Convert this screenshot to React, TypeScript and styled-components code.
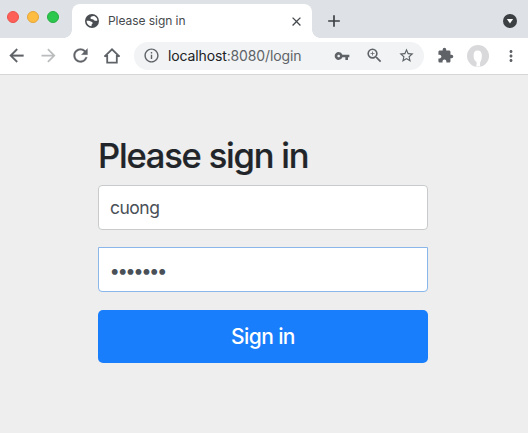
import React from "react";
import styled, { createGlobalStyle } from "styled-components";
import {
  MdArrowBack,
  MdArrowForward,
  MdRefresh,
  MdInfoOutline,
  MdVpnKey,
  MdZoomIn,
  MdStarBorder,
  MdExtension,
  MdMoreVert,
  MdClose,
  MdAdd,
} from "react-icons/md";

const GlobalStyle = createGlobalStyle`
  *, *::before, *::after { box-sizing: border-box; }
  body { margin: 0; background: #eee; font-family: Inter, "Liberation Sans", sans-serif; }
  svg { display: block; flex: none; }
`;

const Window = styled.div`
  display: flex;
  flex-direction: column;
  width: 528px;
  height: 433px;
  overflow: hidden;
  background: #eee;
`;

const TabStrip = styled.header`
  display: flex;
  height: 38px;
  padding: 4px 11px 0 7px;
  background: #dee1e6;
`;

const TrafficLights = styled.div`
  display: flex;
  gap: 8px;
  width: 65px;
  padding-top: 7px;
`;

const Light = styled.span<{ $fill: string; $edge: string }>`
  width: 12px;
  height: 12px;
  border-radius: 50%;
  background: ${(p) => p.$fill};
  border: 1px solid ${(p) => p.$edge};
`;

const Tab = styled.div`
  position: relative;
  display: flex;
  align-items: center;
  width: 240px;
  height: 34px;
  padding: 0 8px 0 13px;
  border-radius: 8px 8px 0 0;
  background: #fff;
  color: #45494d;

  &::before,
  &::after {
    content: "";
    position: absolute;
    bottom: 0;
    width: 8px;
    height: 8px;
  }
  &::before {
    left: -8px;
    background: radial-gradient(circle at 0 0, transparent 7.5px, #fff 8px);
  }
  &::after {
    right: -8px;
    background: radial-gradient(circle at 100% 0, transparent 7.5px, #fff 8px);
  }
`;

const TabTitle = styled.span`
  flex: 1;
  margin-left: 9px;
  font-size: 12px;
  line-height: 16px;
  letter-spacing: -0.05px;
  white-space: nowrap;
`;

const NewTab = styled.div`
  display: flex;
  align-items: center;
  margin-left: 12px;
  color: #3c4043;
`;

const TabSearch = styled.div`
  display: flex;
  align-items: center;
  margin-left: auto;
`;

const Toolbar = styled.nav`
  display: flex;
  align-items: center;
  height: 37px;
  padding: 0 0 1px 5px;
  border-bottom: 1px solid #d5d6d8;
  background: #fff;
  color: #5f6368;
`;

const ToolSlot = styled.span<{ $width: number; $faded?: boolean; $heavy?: boolean }>`
  display: flex;
  flex: none;
  justify-content: center;
  width: ${(p) => p.$width}px;
  color: ${(p) => (p.$faded ? "#babcbe" : "#5f6368")};

  ${(p) => p.$heavy && "path:last-child { stroke: currentColor; stroke-width: 0.3px; }"}
`;

const MenuSlot = styled(ToolSlot)`
  margin-left: 4px;
`;

const AddressBar = styled.div`
  display: flex;
  flex: none;
  align-items: center;
  width: 290px;
  height: 28px;
  margin-left: 1px;
  padding: 0 2px 0 9px;
  border-radius: 14px;
  background: #f1f3f4;
`;

const Url = styled.span`
  flex: 1;
  margin-left: 8px;
  font-size: 14px;
  line-height: 20px;
  white-space: nowrap;
  letter-spacing: -0.13px;
  color: #5f6368;
`;

const Host = styled.span`
  color: #202124;
`;

const LoginForm = styled.form`
  display: flex;
  flex-direction: column;
  width: 330px;
  margin: 60px auto 0 98px;
`;

const Heading = styled.h2`
  margin: 0 0 9px;
  font-size: 34.5px;
  font-weight: 500;
  line-height: 41px;
  letter-spacing: -1.2px;
  white-space: nowrap;
  color: #212529;
  -webkit-text-stroke: 0.2px #212529;
`;

const Field = styled.input`
  width: 100%;
  height: 45px;
  margin: 0 0 17px;
  padding: 0 11px;
  border: 1px solid #c8cacc;
  border-radius: 4px;
  outline: none;
  background: #fff;
  color: #495057;
  font: 400 17.5px/24px Inter, "Liberation Sans", sans-serif;
  letter-spacing: -0.5px;
`;

const PasswordField = styled(Field)`
  margin-bottom: 18px;
  padding: 0 10.5px;
  border-color: #8ab6ea;
  border-radius: 0 0 4px 4px;
  font-size: 18.5px;
  letter-spacing: -2.5px;
`;

const SubmitButton = styled.button`
  height: 53px;
  padding: 0;
  border: 0;
  border-radius: 5px;
  background: #197efb;
  color: #fff;
  font: 500 21px/30px Inter, "Liberation Sans", sans-serif;
  letter-spacing: -0.6px;
`;

const GlobeIcon = () => (
  <svg width="14" height="14" viewBox="0 0 14 14">
    <circle cx="7" cy="7" r="7" fill="#4a4d51" />
    <path d="M9.200 2C7.300 1.900 5.600 2.600 5.500 3.900c-.1 1.200 1.200 1.200 2.300 1.300.9.100.7 1.100 1.500 1.400.8.300 2-.2 3 .2.2-2-.9-3.800-3.100-4.800z" fill="#fff" />
    <path d="M1.600 6.800c1.500.1 3.100-.1 4.100.6.800.6 2 .4 2 1.500 0 .9-1.200 1-1.200 2 0 .5.200.9.100 1.400-2.800-.2-5-2.400-5-5.500z" fill="#fff" />
  </svg>
);

const HomeIcon = () => (
  <svg width="18" height="18" viewBox="0 0 18 18" fill="none" stroke="currentColor" strokeWidth="1.8">
    <path d="M1.500 9.700 9 2.300l7.500 7.400M4.200 8v7.700h9.600V8" />
    <path d="M1.600 9.300h3M13.400 9.300h3" strokeWidth="1.400" />
  </svg>
);

const TabSearchIcon = () => (
  <svg width="14" height="14" viewBox="0 0 14 14">
    <circle cx="7" cy="7" r="7" fill="#3c4043" />
    <path d="M3.900 5h6.200L7 9.400z" fill="#fff" />
  </svg>
);

const Avatar = () => (
  <svg width="22" height="22" viewBox="0 0 22 22">
    <circle cx="11" cy="11" r="11" fill="#d9d9db" />
    <path
      d="M10.500 5.500c-2.700 0-3.900 2-3.900 4.900 0 3 1 5.500 2.800 6.400.5 1.700.3 3-.4 4.600h4.400c-.5-1.500-.5-2.500-.1-4.500 1-1.300 1.600-3.600 1.600-6.300 0-3.200-1.600-5.100-4.400-5.100z"
      fill="#fff"
    />
  </svg>
);

export default function App() {
  return (
    <Window>
      <GlobalStyle />
      <TabStrip>
        <TrafficLights>
          <Light $fill="#ff5f57" $edge="#e9524a" />
          <Light $fill="#febc40" $edge="#e3a53a" />
          <Light $fill="#2bc84d" $edge="#26ad40" />
        </TrafficLights>
        <Tab>
          <GlobeIcon />
          <TabTitle>Please sign in</TabTitle>
          <MdClose size={15} />
        </Tab>
        <NewTab>
          <MdAdd size={20} />
        </NewTab>
        <TabSearch>
          <TabSearchIcon />
        </TabSearch>
      </TabStrip>
      <Toolbar>
        <ToolSlot $width={22} $heavy><MdArrowBack size={21} /></ToolSlot>
        <ToolSlot $width={42} $faded><MdArrowForward size={21} /></ToolSlot>
        <ToolSlot $width={22} $heavy><MdRefresh size={21} /></ToolSlot>
        <ToolSlot $width={42}><HomeIcon /></ToolSlot>
        <AddressBar>
          <MdInfoOutline size={17} />
          <Url><Host>localhost</Host>:8080/login</Url>
          <ToolSlot $width={32}><MdVpnKey size={16} /></ToolSlot>
          <ToolSlot $width={32}><MdZoomIn size={19} /></ToolSlot>
          <ToolSlot $width={32}><MdStarBorder size={17} /></ToolSlot>
        </AddressBar>
        <ToolSlot $width={43}><MdExtension size={17} /></ToolSlot>
        <ToolSlot $width={22}><Avatar /></ToolSlot>
        <MenuSlot $width={35}><MdMoreVert size={18} /></MenuSlot>
      </Toolbar>
      <LoginForm onSubmit={(e) => e.preventDefault()}>
        <Heading>Please sign in</Heading>
        <Field type="text" defaultValue="cuong" aria-label="Username" />
        <PasswordField type="password" defaultValue="1234567" aria-label="Password" />
        <SubmitButton type="submit">Sign in</SubmitButton>
      </LoginForm>
    </Window>
  );
}
